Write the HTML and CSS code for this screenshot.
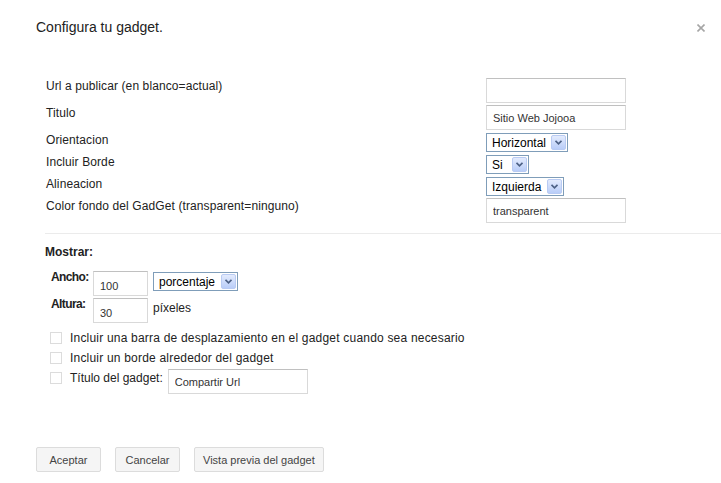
FILE: index.html
```html
<!DOCTYPE html>
<html>
<head>
  <meta charset="UTF-8">
  <title>Configura tu gadget</title>
  <link rel="stylesheet" href="styles.css">
</head>
<body>
  <div class="dialog">
    <div class="dialog-head">
      <h1 class="dialog-title">Configura tu gadget.</h1>
      <span class="dialog-close">
        <svg width="8" height="8" viewBox="0 0 8 8"><path d="M0.5 0.5 L7.5 7.5 M7.5 0.5 L0.5 7.5" stroke="#a6a6a6" stroke-width="1.6"/></svg>
      </span>
    </div>

    <div class="settings">
      <label class="set-label">Url a publicar (en blanco=actual)</label>
      <input class="text-input" type="text" value="">

      <label class="set-label">Titulo</label>
      <input class="text-input" type="text" value="Sitio Web Jojooa">

      <label class="set-label">Orientacion</label>
      <div class="ctl"><span class="sel sel-orient"><span class="sel-text">Horizontal</span><span class="sel-btn"><svg width="7" height="5" viewBox="0 0 7 5"><path d="M0.5 0.8 L3.5 3.8 L6.5 0.8" fill="none" stroke="#4d6185" stroke-width="1.7"/></svg></span></span></div>

      <label class="set-label">Incluir Borde</label>
      <div class="ctl"><span class="sel sel-border"><span class="sel-text">Si</span><span class="sel-btn"><svg width="7" height="5" viewBox="0 0 7 5"><path d="M0.5 0.8 L3.5 3.8 L6.5 0.8" fill="none" stroke="#4d6185" stroke-width="1.7"/></svg></span></span></div>

      <label class="set-label">Alineacion</label>
      <div class="ctl"><span class="sel sel-align"><span class="sel-text">Izquierda</span><span class="sel-btn"><svg width="7" height="5" viewBox="0 0 7 5"><path d="M0.5 0.8 L3.5 3.8 L6.5 0.8" fill="none" stroke="#4d6185" stroke-width="1.7"/></svg></span></span></div>

      <label class="set-label">Color fondo del GadGet (transparent=ninguno)</label>
      <input class="text-input" type="text" value="transparent">
    </div>

    <div class="display">
      <div class="display-title">Mostrar:</div>

      <div class="size-grid">
        <label class="size-label">Ancho:</label>
        <input class="text-input size-input" type="text" value="100">
        <div class="ctl"><span class="sel sel-unit"><span class="sel-text">porcentaje</span><span class="sel-btn"><svg width="7" height="5" viewBox="0 0 7 5"><path d="M0.5 0.8 L3.5 3.8 L6.5 0.8" fill="none" stroke="#4d6185" stroke-width="1.7"/></svg></span></span></div>

        <label class="size-label">Altura:</label>
        <input class="text-input size-input" type="text" value="30">
        <span class="unit-text">píxeles</span>
      </div>

      <div class="opts">
        <div class="opt"><span class="check"></span><span class="opt-text">Incluir una barra de desplazamiento en el gadget cuando sea necesario</span></div>
        <div class="opt"><span class="check"></span><span class="opt-text">Incluir un borde alrededor del gadget</span></div>
        <div class="opt"><span class="check"></span><span class="opt-text opt-text-plain">Título del gadget:</span><input class="text-input title-input" type="text" value="Compartir Url"></div>
      </div>
    </div>

    <div class="actions">
      <button class="btn">Aceptar</button>
      <button class="btn">Cancelar</button>
      <button class="btn">Vista previa del gadget</button>
    </div>
  </div>
</body>
</html>
```

FILE: styles.css
```css
body { margin: 0; background: #fff; font-family: "Liberation Sans", Arial, sans-serif; color: #222; }

.dialog-head { display: flex; justify-content: space-between; align-items: flex-start; padding: 18px 16px 0 36px; }
.dialog-title { margin: 0; font-size: 14px; font-weight: normal; line-height: 18px; color: #222; }
.dialog-close { display: flex; margin-top: 6px; }

.settings { display: grid; grid-template-columns: 440px 140px; row-gap: 2px; margin: 42px 0 0 46px; }
.set-label { font-size: 12px; line-height: 14px; padding-top: 1px; letter-spacing: 0.1px; }
.ctl { display: flex; align-items: flex-start; padding-top: 1px; }

.text-input { box-sizing: border-box; width: 140px; height: 25px; padding: 0 0 0 6px; border: 1px solid #d9d9d9; border-top-color: #c0c0c0; font-family: "Liberation Sans", Arial, sans-serif; font-size: 11px; color: #333; outline: none; }

.sel { box-sizing: border-box; display: flex; align-items: center; justify-content: space-between; height: 19px; border: 1px solid #7f9db9; background: #fff; }
.sel-text { font-size: 12px; color: #000; padding-left: 5px; }
.sel-btn { box-sizing: border-box; display: flex; align-items: center; justify-content: center; width: 15px; height: 15px; margin-right: 1px; border: 1px solid #b9cbf3; border-radius: 2px; background: linear-gradient(#e3ebfd, #b9cdf8); }
.sel-orient { width: 82px; }
.sel-border { width: 43px; }
.sel-align { width: 78px; }
.sel-unit { width: 85px; }

.display { margin: 10px 0 0 45px; padding-top: 11px; border-top: 1px solid #ebebeb; }
.display-title { font-size: 12px; font-weight: bold; line-height: 14px; color: #222; }

.size-grid { display: grid; grid-template-columns: 37px 55px auto; column-gap: 5px; row-gap: 2px; margin: 12px 0 0 6px; align-items: start; }
.size-label { font-size: 12px; font-weight: bold; line-height: 14px; margin-top: -1px; letter-spacing: -0.6px; white-space: nowrap; }
.size-input { width: 55px; padding-top: 4px; }
.unit-text { font-size: 12px; line-height: 14px; padding-top: 3px; }

.opts { display: flex; flex-direction: column; gap: 5px; margin: 7px 0 0 5px; }
.opt { display: flex; align-items: flex-start; font-size: 12px; line-height: 14px; }
.check { box-sizing: border-box; width: 12px; height: 12px; margin: 2px 8px 0 0; border: 1px solid #dcdcdc; background: #fff; }
.opt-text { padding-top: 1px; letter-spacing: 0.2px; }
.opt-text-plain { letter-spacing: 0; }
.title-input { margin-left: 5px; margin-top: -1px; }

.actions { display: flex; gap: 14px; margin: 53px 0 0 36px; }
.btn { box-sizing: border-box; height: 25px; min-width: 65px; padding: 0 8px; border: 1px solid #dcdcdc; border-radius: 2px; background: #f5f5f5; font-family: "Liberation Sans", Arial, sans-serif; font-size: 11px; color: #444; }
```
